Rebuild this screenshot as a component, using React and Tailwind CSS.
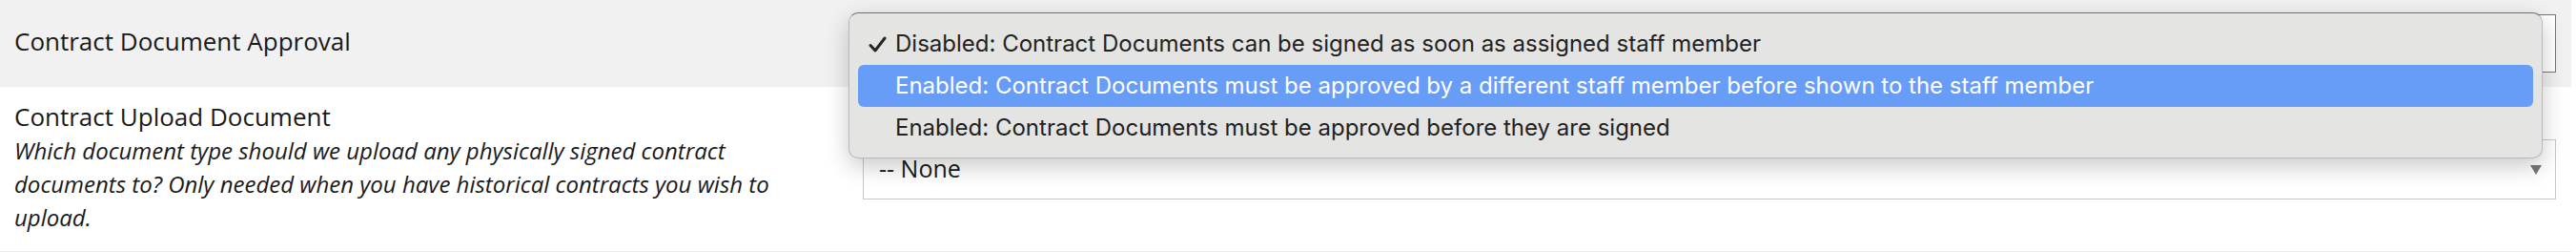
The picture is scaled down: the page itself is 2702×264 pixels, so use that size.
import React from 'react';

const options = [
  'Disabled: Contract Documents can be signed as soon as assigned staff member',
  'Enabled: Contract Documents must be approved by a different staff member before shown to the staff member',
  'Enabled: Contract Documents must be approved before they are signed',
];

const Check = () => (
  <svg width="19" height="17" viewBox="0 0 19 17" className="absolute left-[11px] top-[14px]">
    <path d="M2 9.5 L7 15 L17 2" fill="none" stroke="#262626" strokeWidth="3" strokeLinecap="round" strokeLinejoin="round" />
  </svg>
);

const App = () => {
  return (
    <div className="relative w-[2702px] h-[264px] bg-white text-[#1a1a1a]" style={{ fontFamily: '"Open Sans", Lato, sans-serif' }}>
      <div className="w-[2697px]">
        {/* Contract Document Approval */}
        <div className="flex items-center h-[91px] bg-[#f1f1f1]">
          <div className="w-[890px] pl-[15px] pr-[15px] pb-[4px] text-[26px] leading-[33px]">
            Contract Document Approval
          </div>
          <div className="flex-1 pl-[15px] pr-[16px]">
            <div className="h-[61px] bg-white border border-[#767676]"></div>
          </div>
        </div>

        {/* Contract Upload Document */}
        <div className="flex h-[173px] border-b border-[#ececec]">
          <div className="w-[890px] pl-[15px] pr-[15px] pt-[13px]">
            <div className="text-[26px] leading-[36px]">Contract Upload Document</div>
            <div className="italic text-[24px] leading-[35px]">
              Which document type should we upload any physically signed contract documents to? Only needed when you have historical contracts you wish to upload.
            </div>
          </div>
          <div className="flex-1 self-center pl-[15px] pr-[16px]">
            <div className="relative h-[63px] bg-white border border-[#c8c8c8] flex items-center pl-[16px] text-[25px]">
              -- None
              <svg width="12" height="10" viewBox="0 0 12 10" className="absolute right-[14px] top-[26px]">
                <path d="M0 0 H12 L6 10 Z" fill="#777" />
              </svg>
            </div>
          </div>
        </div>
      </div>

      {/* open native menu */}
      <div
        className="absolute left-[890px] top-[13px] w-[1777px] h-[153px] rounded-[10px] bg-[#e4e4e2] border border-[#b9b9b9] border-t-[#6f6f6f] shadow-[0_8px_24px_rgba(0,0,0,0.22)] py-[10px] px-[9px] text-[24px] text-[#222]"
        style={{ fontFamily: 'Inter, Roboto, sans-serif' }}
      >
        {options.map((o, i) => (
          <div
            key={i}
            className={
              i === 1
                ? 'relative h-[44px] flex items-center pl-[39px] rounded-[6px] bg-[#679df7] text-white'
                : 'relative h-[44px] flex items-center pl-[39px]'
            }
          >
            {i === 0 && <Check />}
            {o}
          </div>
        ))}
      </div>
    </div>
  );
};

export default App;
